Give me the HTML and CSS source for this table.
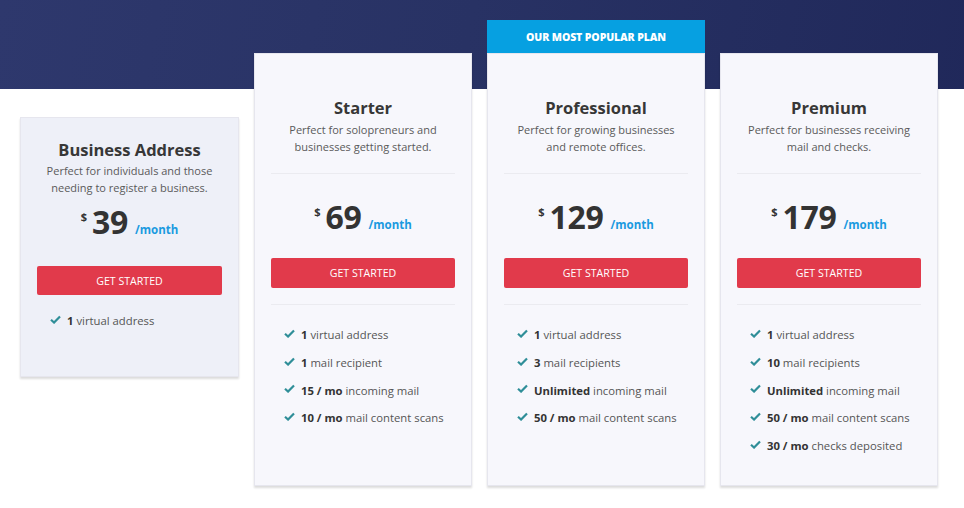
FILE: index.html
```html
<!DOCTYPE html>
<html>
<head>
<meta charset="utf-8">
<link rel="stylesheet" href="styles.css">
</head>
<body>
<section class="pricing">
  <div class="plans">
    <div class="card card-basic">
      <h3 class="title">Business Address</h3>
      <p class="desc">Perfect for individuals and those<br>needing to register a business.</p>
      <div class="price"><span class="cur">$</span><span class="amt">39</span><span class="per">/month</span></div>
      <a class="btn">GET STARTED</a>
      <ul class="feats">
        <li><svg viewBox="0 0 12 10"><path d="M1 5.2 L4.4 8.4 L11 1.6"/></svg><span><b>1</b> virtual address</span></li>
      </ul>
    </div>

    <div class="col">
      <div class="card card-plan">
        <h3 class="title">Starter</h3>
        <p class="desc">Perfect for solopreneurs and<br>businesses getting started.</p>
        <hr class="div">
        <div class="price"><span class="cur">$</span><span class="amt">69</span><span class="per">/month</span></div>
        <a class="btn">GET STARTED</a>
        <hr class="div div2">
        <ul class="feats">
          <li><svg viewBox="0 0 12 10"><path d="M1 5.2 L4.4 8.4 L11 1.6"/></svg><span><b>1</b> virtual address</span></li>
          <li><svg viewBox="0 0 12 10"><path d="M1 5.2 L4.4 8.4 L11 1.6"/></svg><span><b>1</b> mail recipient</span></li>
          <li><svg viewBox="0 0 12 10"><path d="M1 5.2 L4.4 8.4 L11 1.6"/></svg><span><b>15 / mo</b> incoming mail</span></li>
          <li><svg viewBox="0 0 12 10"><path d="M1 5.2 L4.4 8.4 L11 1.6"/></svg><span><b>10 / mo</b> mail content scans</span></li>
        </ul>
      </div>
    </div>

    <div class="col col-popular">
      <div class="badge">OUR MOST POPULAR PLAN</div>
      <div class="card card-plan">
        <h3 class="title">Professional</h3>
        <p class="desc">Perfect for growing businesses<br>and remote offices.</p>
        <hr class="div">
        <div class="price"><span class="cur">$</span><span class="amt">129</span><span class="per">/month</span></div>
        <a class="btn">GET STARTED</a>
        <hr class="div div2">
        <ul class="feats">
          <li><svg viewBox="0 0 12 10"><path d="M1 5.2 L4.4 8.4 L11 1.6"/></svg><span><b>1</b> virtual address</span></li>
          <li><svg viewBox="0 0 12 10"><path d="M1 5.2 L4.4 8.4 L11 1.6"/></svg><span><b>3</b> mail recipients</span></li>
          <li><svg viewBox="0 0 12 10"><path d="M1 5.2 L4.4 8.4 L11 1.6"/></svg><span><b>Unlimited</b> incoming mail</span></li>
          <li><svg viewBox="0 0 12 10"><path d="M1 5.2 L4.4 8.4 L11 1.6"/></svg><span><b>50 / mo</b> mail content scans</span></li>
        </ul>
      </div>
    </div>

    <div class="col">
      <div class="card card-plan">
        <h3 class="title">Premium</h3>
        <p class="desc">Perfect for businesses receiving<br>mail and checks.</p>
        <hr class="div">
        <div class="price"><span class="cur">$</span><span class="amt">179</span><span class="per">/month</span></div>
        <a class="btn">GET STARTED</a>
        <hr class="div div2">
        <ul class="feats">
          <li><svg viewBox="0 0 12 10"><path d="M1 5.2 L4.4 8.4 L11 1.6"/></svg><span><b>1</b> virtual address</span></li>
          <li><svg viewBox="0 0 12 10"><path d="M1 5.2 L4.4 8.4 L11 1.6"/></svg><span><b>10</b> mail recipients</span></li>
          <li><svg viewBox="0 0 12 10"><path d="M1 5.2 L4.4 8.4 L11 1.6"/></svg><span><b>Unlimited</b> incoming mail</span></li>
          <li><svg viewBox="0 0 12 10"><path d="M1 5.2 L4.4 8.4 L11 1.6"/></svg><span><b>50 / mo</b> mail content scans</span></li>
          <li><svg viewBox="0 0 12 10"><path d="M1 5.2 L4.4 8.4 L11 1.6"/></svg><span><b>30 / mo</b> checks deposited</span></li>
        </ul>
      </div>
    </div>
  </div>
</section>
</body>
</html>
```

FILE: styles.css
```css
* { box-sizing: border-box; }
html, body { margin: 0; padding: 0; background: #fff; }
body {
  font-family: "Open Sans", "Liberation Sans", sans-serif;
  color: #555;
  width: 964px;
  height: 508px;
  overflow: hidden;
}
.pricing {
  height: 508px;
  background:
    linear-gradient(to bottom, transparent 0, transparent 89px, #fff 89px),
    linear-gradient(100deg, #2e386d 0%, #283264 45%, #1f2759 100%);
}
.plans {
  display: flex;
  align-items: flex-start;
  gap: 15px;
  padding-left: 20px;
}
.card {
  background: #f7f7fc;
  border: 1px solid #e6e6ee;
  box-shadow: 0 2px 2px rgba(0,0,0,0.14);
  display: flex;
  flex-direction: column;
  align-items: center;
}
.card-basic {
  width: 219px;
  height: 260px;
  margin-top: 117px;
  background: #eef0f8;
  padding: 21px 16px 0;
}
.col { width: 218px; margin-top: 53px; }
.col-popular { margin-top: 20px; }
.badge {
  height: 33px;
  background: #06a0e1;
  color: #fff;
  font-weight: 800;
  font-size: 10.5px;
  letter-spacing: -0.1px;
  display: flex;
  align-items: center;
  justify-content: center;
}
.card-plan {
  height: 433px;
  padding: 43px 16px 0;
}
.title {
  margin: 0;
  font-size: 16.5px;
  line-height: 22px;
  font-weight: 700;
  color: #373737;
}
.desc {
  margin: 2px 0 0;
  font-size: 11px;
  line-height: 17px;
  text-align: center;
  color: #5a5a5a;
}
.card-basic .desc { line-height: 16.5px; }
.div {
  width: 100%;
  border: 0;
  border-top: 1px solid #ebebf0;
  margin: 18px 0 0;
}
.div2 { margin-top: 16px; }
.price {
  display: flex;
  align-items: baseline;
  height: 38px;
  color: #333;
}
.card-plan .price { margin-top: 24px; }
.card-basic .price { margin-top: 7px; }
.cur {
  font-size: 11px;
  font-weight: 700;
  align-self: flex-start;
  margin-top: 6px;
  margin-right: 5px;
}
.amt {
  font-size: 32px;
  line-height: 38px;
  font-weight: 700;
  letter-spacing: -0.3px;
  color: #333;
}
.per {
  font-size: 11.5px;
  font-weight: 700;
  color: #1a9ae0;
  margin-left: 7px;
}
.btn {
  display: flex;
  align-items: center;
  justify-content: center;
  width: 100%;
  height: 30px;
  background: #e13a4b;
  color: #fff;
  border-radius: 2px;
  font-size: 10.6px;
  font-weight: 500;
  margin-top: 22px;
}
.card-basic .btn { margin-top: 25px; height: 29px; }
.feats {
  list-style: none;
  margin: 0;
  padding: 0 0 0 13px;
  width: 100%;
  font-size: 11.3px;
  color: #555;
}
.card-plan .feats { margin-top: 16px; }
.card-basic .feats { margin-top: 12px; }
.feats li {
  display: flex;
  align-items: center;
  height: 27.7px;
}
.feats svg {
  width: 11px;
  height: 9px;
  margin-right: 6px;
  margin-top: -3px;
  flex: none;
}
.feats svg path {
  fill: none;
  stroke: #2f8e98;
  stroke-width: 2.4;
  stroke-linecap: butt;
  stroke-linejoin: miter;
}
.feats b { color: #333; font-weight: 700; }
```
